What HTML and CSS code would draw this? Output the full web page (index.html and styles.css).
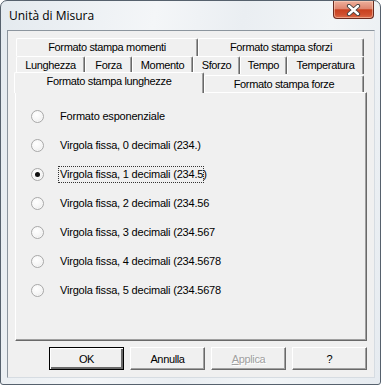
FILE: index.html
```html
<!DOCTYPE html>
<html lang="it">
<head>
  <meta charset="UTF-8">
  <title>Unità di Misura</title>
  <link rel="stylesheet" href="styles.css">
</head>
<body>
  <div class="window">
    <div class="titlebar">
      <span class="title">Unità di Misura</span>
      <div class="close-btn">
        <svg width="17" height="12" viewBox="0 0 17 12">
          <path d="M4 2 L13 10 M13 2 L4 10" stroke="#3c3c3c" stroke-width="4.2" stroke-linecap="round"/>
          <path d="M4 2 L13 10 M13 2 L4 10" stroke="#ffffff" stroke-width="2.4" stroke-linecap="round"/>
        </svg>
      </div>
    </div>

    <div class="client">
      <div class="tabs">
        <div class="tab-row">
          <div class="tab w182">Formato stampa momenti</div>
          <div class="tab w166">Formato stampa sforzi</div>
        </div>
        <div class="tab-row">
          <div class="tab w69">Lunghezza</div>
          <div class="tab w47">Forza</div>
          <div class="tab w61">Momento</div>
          <div class="tab w47">Sforzo</div>
          <div class="tab w47">Tempo</div>
          <div class="tab w77">Temperatura</div>
        </div>
        <div class="tab-row front">
          <div class="tab selected">Formato stampa lunghezze</div>
          <div class="tab w160">Formato stampa forze</div>
        </div>
      </div>

      <div class="panel">
        <!-- formato di stampa delle lunghezze -->
        <div class="option"><span class="radio"></span><span class="label">Formato esponenziale</span></div>
        <div class="option"><span class="radio"></span><span class="label">Virgola fissa, 0 decimali (234.)</span></div>
        <div class="option"><span class="radio checked"></span><span class="label focused">Virgola fissa, 1 decimali (234.5)</span></div>
        <div class="option"><span class="radio"></span><span class="label">Virgola fissa, 2 decimali (234.56</span></div>
        <div class="option"><span class="radio"></span><span class="label">Virgola fissa, 3 decimali (234.567</span></div>
        <div class="option"><span class="radio"></span><span class="label">Virgola fissa, 4 decimali (234.5678</span></div>
        <div class="option"><span class="radio"></span><span class="label">Virgola fissa, 5 decimali (234.5678</span></div>
      </div>

      <div class="buttons">
        <button class="btn default">OK</button>
        <button class="btn">Annulla</button>
        <button class="btn disabled"><u>A</u>pplica</button>
        <button class="btn">?</button>
      </div>
    </div>
  </div>
</body>
</html>
```

FILE: styles.css
```css
* {
  box-sizing: border-box;
}
html, body {
  margin: 0;
  padding: 0;
  background: #fff;
}
body {
  font-family: "Liberation Sans", Arial, sans-serif;
  font-size: 11px;
  color: #000;
}
.window {
  width: 381px;
  height: 385px;
  border: 1px solid #56616d;
  border-radius: 7px 7px 3px 3px;
  background: linear-gradient(100deg, #e4eaef 0%, #f4f6f8 35%, #eaeef2 55%, #f2f5f7 75%, #e6ebf0 100%);
  padding: 0 5px 6px 6px;
  display: flex;
  flex-direction: column;
}
.titlebar {
  height: 29px;
  display: flex;
  justify-content: space-between;
  align-items: flex-start;
  padding-left: 2px;
}
.title {
  font-family: "Open Sans", "Liberation Sans", sans-serif;
  font-size: 12px;
  margin-top: 6px;
  color: #000;
}
.close-btn {
  width: 41px;
  height: 18px;
  margin-right: 1px;
  border: 1px solid #6a2b20;
  border-top: none;
  border-radius: 0 0 4px 4px;
  background: linear-gradient(#eeb09c 0%, #df8670 45%, #c8401f 52%, #d0502f 80%, #dc6c4b 100%);
  box-shadow: inset 0 0 0 1px rgba(255, 220, 200, 0.5);
  display: flex;
  align-items: center;
  justify-content: center;
}
.client {
  flex: 1;
  background: #f0f0f0;
  border: 1px solid #8c959e;
  border-right-color: #d6dce2;
  border-bottom-color: #d6dce2;
  padding: 7px 6px 0 7px;
  display: flex;
  flex-direction: column;
  letter-spacing: -0.35px;
}
.tabs {
  display: flex;
  flex-direction: column;
  width: 352px;
}
.tab-row {
  display: flex;
  height: 18px;
  margin-left: 1px;
}
.tab-row.front {
  margin-left: -1px;
}
.tab {
  height: 18px;
  background: #f0f0f0;
  border-top: 1px solid #fff;
  border-left: 1px solid #fff;
  border-right: 1px solid #696969;
  border-radius: 2px 2px 0 0;
  box-shadow: inset -1px 0 #a0a0a0;
  text-align: center;
  line-height: 16px;
  white-space: nowrap;
}
.front .tab {
  margin-top: 1px;
  height: 17px;
}
.front .tab.selected {
  width: 190px;
  height: 21px;
  margin-top: -2px;
  margin-bottom: -1px;
  position: relative;
  z-index: 1;
  line-height: 17px;
}
.w182 { width: 182px; }
.w166 { width: 166px; }
.w69 { width: 69px; }
.w47 { width: 47px; }
.w61 { width: 61px; }
.w77 { width: 77px; }
.w160 { width: 160px; }

.panel {
  width: 352px;
  height: 249px;
  border: 1px solid;
  border-color: #fff #696969 #696969 #fff;
  box-shadow: inset -1px -1px #a0a0a0;
  padding: 9px 0 0 15px;
  display: flex;
  flex-direction: column;
  letter-spacing: -0.2px;
}
.option {
  height: 29px;
  display: flex;
  align-items: center;
}
.radio {
  width: 13px;
  height: 13px;
  border-radius: 50%;
  border: 1px solid #a8a8a8;
  background: radial-gradient(circle at 40% 35%, #ffffff 0%, #f6f6f6 50%, #dcdcdc 100%);
  box-shadow: inset 0 0 0 1px #f8f8f8;
  margin-right: 14px;
  display: flex;
  align-items: center;
  justify-content: center;
}
.radio.checked::after {
  content: "";
  width: 5px;
  height: 5px;
  border-radius: 50%;
  background: #111;
}
.label {
  height: 17px;
  line-height: 15px;
  padding-left: 1px;
  white-space: nowrap;
  border: 1px dotted transparent;
}
.label.focused {
  width: 146px;
  border-color: #333;
}
.buttons {
  display: flex;
  justify-content: flex-end;
  gap: 6px;
  width: 352px;
  margin-top: 6px;
}
.btn {
  width: 75px;
  height: 23px;
  font-family: "Liberation Sans", Arial, sans-serif;
  font-size: 11px;
  letter-spacing: -0.35px;
  background: #f0f0f0;
  border: 1px solid;
  border-color: #fff #696969 #696969 #fff;
  box-shadow: inset -1px -1px #a0a0a0;
  padding: 0;
  color: #000;
}
.btn.default {
  border: 1px solid #000;
  box-shadow: inset 1px 1px #fff, inset -2px -2px #696969, inset -1px -1px #a0a0a0;
}
.btn.disabled {
  color: #a0a0a0;
  text-shadow: 1px 1px #fff;
}
```
